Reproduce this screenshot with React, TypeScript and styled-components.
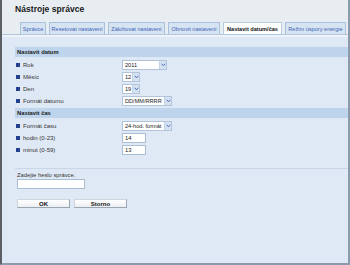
import React from "react";
import styled, { createGlobalStyle, css } from "styled-components";

const GlobalStyle = createGlobalStyle`
  html, body {
    margin: 0;
    padding: 0;
    background: #dfe9f5;
  }
  * {
    box-sizing: border-box;
  }
`;

const Frame = styled.div`
  width: 350px;
  height: 265px;
  display: flex;
  flex-direction: column;
  border-left: 2px solid #5c5f63;
  border-right: 2px solid #8c9bab;
  border-bottom: 2px solid #8c9bab;
  font-family: "Liberation Sans", Arial, sans-serif;
  overflow: hidden;
`;

const Header = styled.div`
  background: #e8edf2;
  padding: 4px 0 0 13px;
  border-bottom: 1px solid #b3c8de;
`;

const Title = styled.h1`
  margin: 0;
  font-size: 8.6px;
  line-height: 10px;
  font-weight: bold;
  color: #1a1a1a;
`;

const TabBar = styled.div`
  display: flex;
  gap: 3px;
  padding: 8px 0 0 5px;
`;

const Tab = styled.div<{ $active?: boolean; $w: number }>`
  width: ${({ $w }) => $w}px;
  height: 12px;
  display: flex;
  align-items: center;
  justify-content: center;
  font-size: 5.6px;
  white-space: nowrap;
  color: #3d5fba;
  background: #d6e3f1;
  border: 1px solid #a9c1dc;
  border-bottom: none;

  ${({ $active }) =>
    $active &&
    css`
      background: #ffffff;
      color: #111;
      font-weight: bold;
      border-color: #b9cbe0;
    `}
`;

const Content = styled.div`
  flex: 1;
  background: #dfe9f5;
  padding: 10px 0 0 13px;
  border-top: 2px solid #eef3f9;
`;

const SectionHead = styled.div`
  height: 10px;
  background: #bdd4ec;
  font-size: 5.8px;
  font-weight: bold;
  color: #1a1a1a;
  display: flex;
  align-items: center;
  padding-left: 2px;
`;

const Rows = styled.div`
  display: flex;
  flex-direction: column;
  gap: 3px;
  padding: 3px 0 3px 1px;
`;

const Row = styled.div`
  display: grid;
  grid-template-columns: 106px auto;
  align-items: center;
  height: 9px;
`;

const Label = styled.span`
  display: flex;
  align-items: center;
  gap: 3px;
  font-size: 6px;
  color: #333;
  white-space: nowrap;

  &::before {
    content: "";
    width: 4px;
    height: 4px;
    background: #23408f;
  }
`;

const SelectBox = styled.div<{ $w: number }>`
  width: ${({ $w }) => $w}px;
  height: 10px;
  display: flex;
  align-items: stretch;
  background: #fff;
  border: 1px solid #b1c4da;
  font-size: 5.6px;
  color: #222;
`;

const SelectText = styled.span`
  flex: 1;
  padding-left: 2px;
  display: flex;
  align-items: center;
  white-space: nowrap;
  overflow: hidden;
`;

const SelectArrow = styled.span`
  width: 7px;
  display: flex;
  align-items: center;
  justify-content: center;
  background: #d3e1f1;
  border-left: 1px solid #c3d3e6;
`;

const TextInput = styled.input<{ $w: number; $h?: number }>`
  width: ${({ $w }) => $w}px;
  height: ${({ $h }) => $h ?? 10}px;
  margin: 0;
  padding: 0 0 0 2px;
  border: 1px solid #a9bdd3;
  background: #fff;
  font-family: "Liberation Sans", Arial, sans-serif;
  font-size: 5.8px;
  color: #222;
  outline: none;
`;

const Divider = styled.div`
  height: 1px;
  margin-top: 11px;
  background: #c8d7e8;
`;

const PasswordBlock = styled.div`
  display: flex;
  flex-direction: column;
  gap: 1px;
  padding: 3px 0 0 2px;
`;

const Hint = styled.span`
  font-size: 5.8px;
  color: #333;
`;

const Buttons = styled.div`
  display: flex;
  gap: 4px;
  padding: 10px 0 0 2px;
`;

const Button = styled.button`
  width: 53px;
  height: 9px;
  padding: 0;
  border: 1px solid #9aa6b2;
  border-top-color: #d0d6dc;
  border-left-color: #d0d6dc;
  background: linear-gradient(#ffffff, #eceff2);
  font-family: "Liberation Sans", Arial, sans-serif;
  font-size: 6px;
  font-weight: bold;
  color: #111;
  display: flex;
  align-items: center;
  justify-content: center;
`;

function Chevron() {
  return (
    <svg width="5" height="4" viewBox="0 0 5 4">
      <path d="M0.7 0.8 L2.5 2.8 L4.3 0.8" fill="none" stroke="#3b5eb8" strokeWidth="0.9" />
    </svg>
  );
}

function Select({ value, w }: { value: string; w: number }) {
  return (
    <SelectBox $w={w}>
      <SelectText>{value}</SelectText>
      <SelectArrow>
        <Chevron />
      </SelectArrow>
    </SelectBox>
  );
}

const tabs = [
  { label: "Správce", w: 26 },
  { label: "Resetovat nastavení", w: 56 },
  { label: "Zálohovat nastavení", w: 57 },
  { label: "Obnovit nastavení", w: 52 },
  { label: "Nastavit datum/čas", w: 59, active: true },
  { label: "Režim úspory energie", w: 61 },
];

export default function App() {
  return (
    <>
      <GlobalStyle />
      <Frame>
        <Header>
          <Title>Nástroje správce</Title>
          <TabBar>
            {tabs.map((t) => (
              <Tab key={t.label} $w={t.w} $active={t.active}>
                {t.label}
              </Tab>
            ))}
          </TabBar>
        </Header>
        <Content>
          <SectionHead>Nastavit datum</SectionHead>
          <Rows>
            <Row>
              <Label>Rok</Label>
              <Select value="2011" w={45} />
            </Row>
            <Row>
              <Label>Měsíc</Label>
              <Select value="12" w={18} />
            </Row>
            <Row>
              <Label>Den</Label>
              <Select value="19" w={18} />
            </Row>
            <Row>
              <Label>Formát datumu</Label>
              <Select value="DD/MM/RRRR" w={50} />
            </Row>
          </Rows>
          <SectionHead>Nastavit čas</SectionHead>
          <Rows>
            <Row>
              <Label>Formát času</Label>
              <Select value="24-hod. formát" w={50} />
            </Row>
            <Row>
              <Label>hodin (0-23)</Label>
              <TextInput $w={24} defaultValue="14" readOnly />
            </Row>
            <Row>
              <Label>minut (0-59)</Label>
              <TextInput $w={24} defaultValue="13" readOnly />
            </Row>
          </Rows>
          <Divider />
          <PasswordBlock>
            <Hint>Zadejte heslo správce.</Hint>
            <TextInput $w={68} $h={10} type="password" readOnly />
          </PasswordBlock>
          <Buttons>
            <Button>OK</Button>
            <Button>Storno</Button>
          </Buttons>
        </Content>
      </Frame>
    </>
  );
}
